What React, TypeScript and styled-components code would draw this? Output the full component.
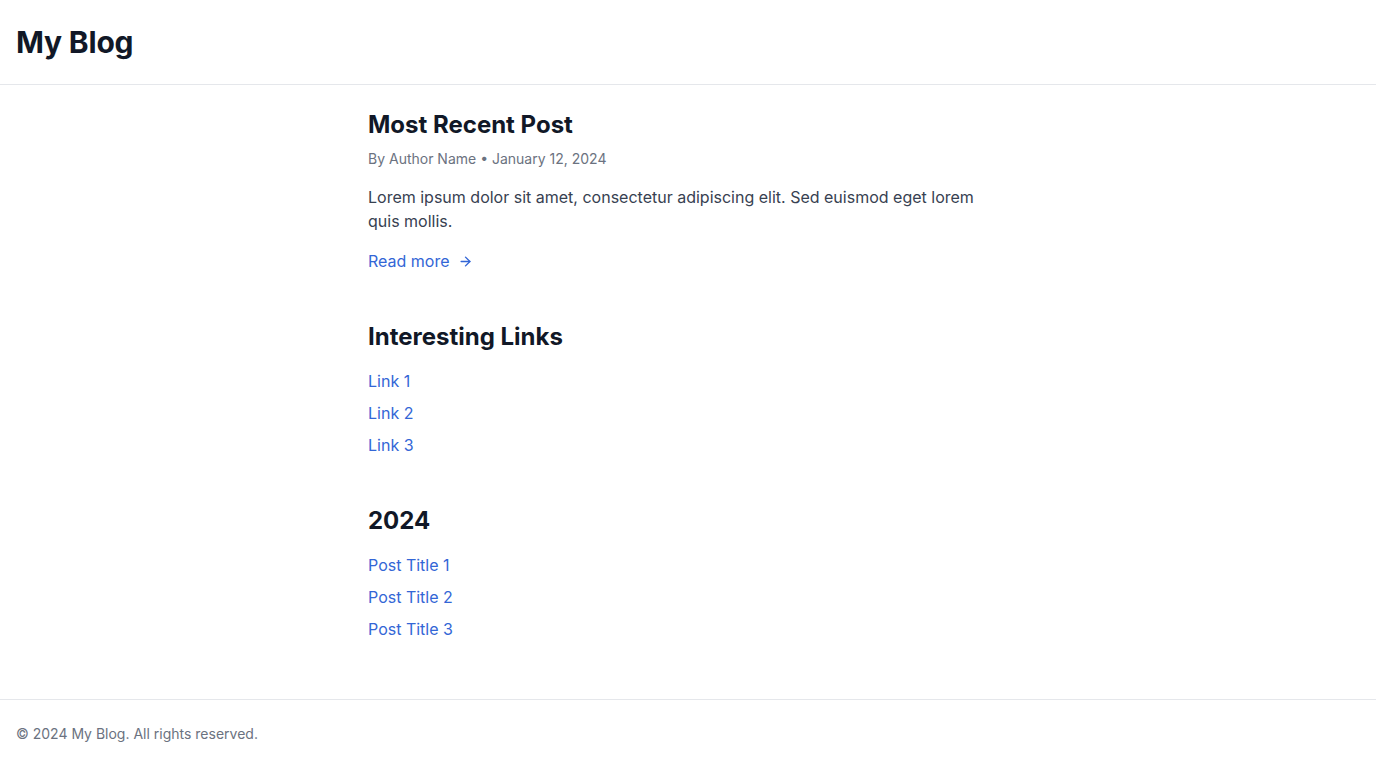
import styled, { createGlobalStyle } from "styled-components";
import { ArrowRight } from "lucide-react";

const GlobalStyle = createGlobalStyle`
  * { box-sizing: border-box; }
  body {
    margin: 0;
    font-family: Inter, "Noto Sans", sans-serif;
    color: #111827;
    background: #fff;
  }
`;

const Page = styled.div`
  min-height: 100vh;
  display: flex;
  flex-direction: column;
`;

const Header = styled.header`
  padding: 24px 16px;
  border-bottom: 1px solid #e5e7eb;
`;

const SiteTitle = styled.h1`
  margin: 0;
  font-size: 30px;
  line-height: 36px;
  font-weight: 700;
  letter-spacing: -0.2px;
  color: #111827;
`;

const Main = styled.main`
  flex: 1;
  width: 100%;
  max-width: 672px;
  margin: 0 auto;
  padding: 24px 16px;
`;

const Section = styled.section`
  margin-bottom: 48px;
  &:last-child { margin-bottom: 0; }
`;

const Heading = styled.h2<{ $gap?: number }>`
  margin: 0 0 ${(p) => p.$gap ?? 16}px;
  font-size: 24px;
  line-height: 32px;
  font-weight: 700;
  color: #111827;
`;

const Meta = styled.p`
  margin: 0 0 16px;
  font-size: 14px;
  line-height: 20px;
  color: #6b7280;
`;

const Body = styled.p`
  margin: 0 0 16px;
  font-size: 16px;
  line-height: 24px;
  color: #374151;
`;

const TextLink = styled.a`
  display: inline-flex;
  align-items: center;
  gap: 8px;
  font-size: 16px;
  line-height: 24px;
  color: #3366d6;
  text-decoration: none;
  cursor: pointer;
`;

const LinkList = styled.ul`
  list-style: none;
  margin: 0;
  padding: 0;
  display: flex;
  flex-direction: column;
  gap: 8px;
`;

const Footer = styled.footer`
  padding: 24px 16px;
  border-top: 1px solid #e5e7eb;
  font-size: 14px;
  line-height: 20px;
  color: #6b7280;
`;

const links = ["Link 1", "Link 2", "Link 3"];
const posts = ["Post Title 1", "Post Title 2", "Post Title 3"];

export default function App() {
  return (
    <Page>
      <GlobalStyle />
      <Header>
        <SiteTitle>My Blog</SiteTitle>
      </Header>
      <Main>
        <Section>
          <Heading $gap={8}>Most Recent Post</Heading>
          <Meta>By Author Name • January 12, 2024</Meta>
          <Body>
            Lorem ipsum dolor sit amet, consectetur adipiscing elit. Sed euismod eget lorem quis mollis.
          </Body>
          <TextLink href="#">
            Read more <ArrowRight size={15} strokeWidth={2.25} />
          </TextLink>
        </Section>
        <Section>
          <Heading>Interesting Links</Heading>
          <LinkList>
            {links.map((l) => (
              <li key={l}>
                <TextLink href="#">{l}</TextLink>
              </li>
            ))}
          </LinkList>
        </Section>
        <Section>
          <Heading>2024</Heading>
          <LinkList>
            {posts.map((p) => (
              <li key={p}>
                <TextLink href="#">{p}</TextLink>
              </li>
            ))}
          </LinkList>
        </Section>
      </Main>
      <Footer>© 2024 My Blog. All rights reserved.</Footer>
    </Page>
  );
}
